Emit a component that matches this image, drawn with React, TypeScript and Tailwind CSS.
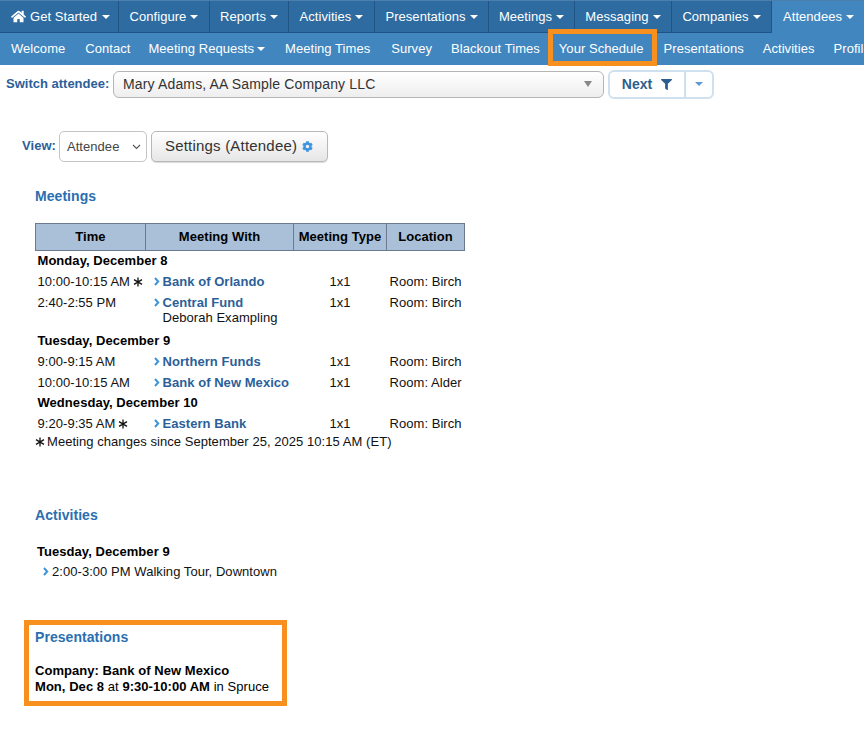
import React from 'react'
import { FaHome, FaFilter, FaCog } from 'react-icons/fa'

const font = { fontFamily: '"Liberation Sans", Arial, sans-serif' }

const topTabs = [
  { label: 'Configure', w: 'w-[91px]' },
  { label: 'Reports', w: 'w-[79px]' },
  { label: 'Activities', w: 'w-[86px]' },
  { label: 'Presentations', w: 'w-[114px]' },
  { label: 'Meetings', w: 'w-[86px]' },
  { label: 'Messaging', w: 'w-[97px]' },
  { label: 'Companies', w: 'w-[100px]' },
]

function Caret({ className = '' }: { className?: string }) {
  return <span className={`inline-block w-0 h-0 border-x-[4px] border-x-transparent border-t-[4px] border-t-white ${className}`} />
}

function Chevron() {
  return (
    <svg width="6" height="9" viewBox="0 0 6 9" className="shrink-0">
      <path d="M1 1 L4.2 4.5 L1 8" fill="none" stroke="#3f94d8" strokeWidth="2" />
    </svg>
  )
}

function Star() {
  return (
    <svg width="10" height="10" viewBox="0 0 10 10" className="inline-block shrink-0">
      <path d="M5 0.5 V9.5 M1 2.6 L9 7.4 M9 2.6 L1 7.4" stroke="#111" strokeWidth="1.3" />
    </svg>
  )
}

function DateRow({ label, h, pb = '' }: { label: string; h: string; pb?: string }) {
  return (
    <tr className={h}>
      <td colSpan={4} className={`pl-[2px] font-bold leading-[16px] text-black align-middle ${pb}`}>{label}</td>
    </tr>
  )
}

function MeetingRow({ time, star, name, sub, room, h }: { time: string; star?: boolean; name: string; sub?: string; room: string; h: string }) {
  return (
    <tr className={h}>
      <td className="pl-[2px] align-top whitespace-nowrap">
        <span className="flex items-center gap-[3px] h-[20px]">{time}{star && <Star />}</span>
      </td>
      <td className="align-top pl-[8px]">
        <div className="flex items-center gap-[3px] h-[20px]">
          <Chevron />
          <span className="font-bold text-[#2c5f99]">{name}</span>
        </div>
        {sub && <div className="pl-[9px] -mt-[1px] leading-[12px]">{sub}</div>}
      </td>
      <td className="align-top text-center"><span className="block leading-[20px]">1x1</span></td>
      <td className="align-top pl-[3px] whitespace-nowrap"><span className="block leading-[20px]">{room}</span></td>
    </tr>
  )
}

export default function App() {
  return (
    <div style={font} className="relative w-[864px] h-[756px] overflow-hidden bg-white text-[13px] tracking-[0.05px] text-[#111]">
      <div className="flex h-[33px] bg-[#2d6ba1] text-white text-[13px] border-t border-t-[#4a7fae]">
        <div className="w-[119px] flex items-center pl-[11px] gap-[4px] border-r border-b border-[#1f5586] shrink-0">
          <FaHome size={15} />
          <span>Get Started</span>
          <Caret className="ml-[1px]" />
        </div>
        {topTabs.map((t) => (
          <div key={t.label} className={`${t.w} flex items-center justify-center gap-[4px] border-r border-b border-[#1f5586] shrink-0`}>
            <span>{t.label}</span>
            <Caret />
          </div>
        ))}
        <div className="flex-1 flex items-center pl-[11px] gap-[4px] bg-[#4286bf]">
          <span>Attendees</span>
          <Caret />
        </div>
      </div>

      <div className="relative flex items-center h-[32px] bg-[#4286bf] text-white text-[13px] whitespace-nowrap">
        <div className="flex gap-[20px] pl-[11px]">
          <span>Welcome</span>
          <span>Contact</span>
          <span className="flex items-center gap-[3px] -ml-[2px]">Meeting Requests<Caret /></span>
          <span>Meeting Times</span>
          <span className="ml-[1px]">Survey</span>
          <span className="-ml-[1px]">Blackout Times</span>
          <span className="-ml-[1px]">Your Schedule</span>
          <span>Presentations</span>
          <span className="-ml-[1px]">Activities</span>
          <span className="-ml-[1px]">Profile</span>
        </div>
        <div className="absolute left-[548px] -top-[4px] w-[109px] h-[37px] border-[5px] border-[#f7901e]" />
      </div>

      <div className="flex items-center h-[38px] pl-[6px]">
        <span className="w-[103px] font-bold tracking-normal whitespace-nowrap text-[#2c5f99]">Switch attendee:</span>
        <div className="ml-[4px] w-[491px] h-[27px] flex items-center justify-between pl-[9px] pr-[11px] rounded-[6px] border border-[#b5b5b5] bg-gradient-to-b from-white to-[#eeeeee] text-[14px] tracking-[0.15px] text-[#333]">
          <span>Mary Adams, AA Sample Company LLC</span>
          <span className="w-0 h-0 border-x-[4px] border-x-transparent border-t-[6px] border-t-[#888]" />
        </div>
        <div className="ml-[4px] flex h-[29px] w-[106px] rounded-[6px] border-2 border-[#cfe0ef]">
          <div className="w-[76px] flex items-center justify-center gap-[9px] border-r-2 border-r-[#cfe0ef] font-bold text-[14px] text-[#2c5f8f]">
            <span>Next</span>
            <FaFilter size={11} />
          </div>
          <div className="flex-1 flex items-center justify-center">
            <span className="w-0 h-0 border-x-[4px] border-x-transparent border-t-[4px] border-t-[#5b9bd5]" />
          </div>
        </div>
      </div>

      <div className="flex items-center mt-[28px] pl-[22px] h-[31px]">
        <span className="font-bold text-[#2c5f99] mb-[2px]">View:</span>
        <div className="ml-[3px] w-[88px] h-[31px] flex items-center justify-between pl-[7px] pr-[5px] rounded-[5px] border border-[#c4c4c4] bg-white text-[#444]">
          <span>Attendee</span>
          <svg width="9" height="6" viewBox="0 0 9 6"><path d="M1 1 L4.5 4.5 L8 1" fill="none" stroke="#555" strokeWidth="1.1" /></svg>
        </div>
        <div className="ml-[4px] w-[177px] h-[31px] flex items-center pl-[13px] gap-[5px] rounded-[5px] border border-[#b8b8b8] bg-gradient-to-b from-white to-[#e6e6e6] text-[15px] tracking-[0.2px] text-[#333] shadow-[0_1px_1px_rgba(0,0,0,0.15)]">
          <span>Settings (Attendee)</span>
          <FaCog size={11} className="text-[#3f94e0]" />
        </div>
      </div>

      <div className="pl-[35px]">
        <h2 className="mt-[26px] text-[14px] leading-[16px] font-bold text-[#2a6fb0]">Meetings</h2>
        <table className="mt-[19px] w-[429px] table-fixed border-collapse">
          <colgroup>
            <col className="w-[110px]" />
            <col className="w-[148px]" />
            <col className="w-[93px]" />
            <col className="w-[78px]" />
          </colgroup>
          <thead>
            <tr className="h-[27px] bg-[#a9c0d8] font-bold text-black">
              <th className="border border-[#6b7a8f]">Time</th>
              <th className="border border-[#6b7a8f]">Meeting With</th>
              <th className="border border-[#6b7a8f] whitespace-nowrap">Meeting Type</th>
              <th className="border border-[#6b7a8f]">Location</th>
            </tr>
          </thead>
          <tbody>
            <DateRow label="Monday, December 8" h="h-[21px]" />
            <MeetingRow time="10:00-10:15 AM" star name="Bank of Orlando" room="Room: Birch" h="h-[21px]" />
            <MeetingRow time="2:40-2:55 PM" name="Central Fund" sub="Deborah Exampling" room="Room: Birch" h="h-[38px]" />
            <DateRow label="Tuesday, December 9" h="h-[21px]" />
            <MeetingRow time="9:00-9:15 AM" name="Northern Funds" room="Room: Birch" h="h-[21px]" />
            <MeetingRow time="10:00-10:15 AM" name="Bank of New Mexico" room="Room: Alder" h="h-[21px]" />
            <DateRow label="Wednesday, December 10" h="h-[20px]" pb="pb-[2px]" />
            <MeetingRow time="9:20-9:35 AM" star name="Eastern Bank" room="Room: Birch" h="h-[20px]" />
          </tbody>
        </table>
        <div className="flex items-center gap-[2px] h-[16px]">
          <Star />
          <span>Meeting changes since September 25, 2025 10:15 AM (ET)</span>
        </div>

        <h2 className="mt-[57px] text-[14px] leading-[16px] font-bold text-[#2a6fb0]">Activities</h2>
        <div className="mt-[21px] pl-[2px] font-bold text-black leading-[16px]">Tuesday, December 9</div>
        <div className="flex items-center gap-[3px] pl-[8px] mt-[4px] leading-[16px]">
          <Chevron />
          <span>2:00-3:00 PM Walking Tour, Downtown</span>
        </div>
      </div>

      <div className="ml-[24px] mt-[40px] w-[263px] h-[86px] border-[5px] border-[#f7901e] pl-[6px] pt-[4px]">
        <h2 className="text-[14px] leading-[16px] font-bold text-[#2a6fb0]">Presentations</h2>
        <div className="mt-[18px] leading-[16px] text-black">
          <div className="font-bold">Company: Bank of New Mexico</div>
          <div><span className="font-bold">Mon, Dec 8</span> at <span className="font-bold">9:30-10:00 AM</span> in Spruce</div>
        </div>
      </div>
    </div>
  )
}
